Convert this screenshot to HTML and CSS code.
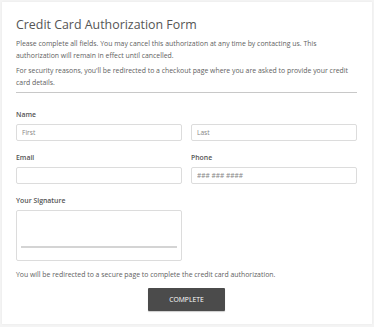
FILE: index.html
```html
<!DOCTYPE html>
<html lang="en">

<head>
  <title>Credit Card Authorization Form</title>
  <meta charset="utf-8">
  <link rel="stylesheet" href="styles.css">
</head>

<body>
  <div class="card">
    <h1>Credit Card Authorization Form</h1>
    <p>Please complete all fields. You may cancel this authorization at any time by contacting us. This authorization will remain in effect until cancelled.</p>
    <p>For security reasons, you'll be redirected to a checkout page where you are asked to provide your credit card details.</p>
    <hr>

    <div class="form">
      <div class="form-control">
        <label>Name</label>
        <div class="row">
          <input type="text" placeholder="First">
          <input type="text" placeholder="Last">
        </div>
      </div>
      <div class="row">
        <div class="form-control">
          <label>Email</label>
          <input type="text">
        </div>
        <div class="form-control">
          <label>Phone</label>
          <input type="text" placeholder="### ### ####">
        </div>
      </div>
      <div class="form-control sign-control">
        <label>Your Signature</label>
        <div class="row">
          <div class="signature"><div class="sign-line"></div></div>
          <div></div>
        </div>
      </div>
      <p class="note">You will be redirected to a secure page to complete the credit card authorization.</p>
      <div class="actions">
        <button class="btn">COMPLETE</button>
      </div>
    </div>
  </div>
</body>

</html>
```

FILE: styles.css
```css
html,
body {
  padding: 0;
  margin: 0;
}

body {
  background: #f4f4f4;
  color: #616161;
  font: 6.9px/12px "Open Sans", "Liberation Sans", sans-serif;
  padding: 2px;
}

input,
button,
label,
p {
  font: inherit;
}

.card {
  background: #fff;
  width: 341px;
  height: 308px;
  padding: 14px 15px 0 14px;
  box-shadow: 0 0 2px rgba(0, 0, 0, .06);
}

h1 {
  margin: 0 0 4px;
  font-size: 12.4px;
  line-height: 18px;
  font-weight: normal;
  color: #555;
}

p {
  margin: 0 0 3px;
}

hr {
  border: none;
  border-top: 1px solid #c8c8c8;
  margin: 3px 0 16px;
}

.row {
  display: grid;
  grid-template-columns: 1fr 1fr;
  column-gap: 9px;
}

.form-control {
  margin-bottom: 11px;
}

.form label {
  display: block;
  font-weight: 600;
  color: #555;
  margin-bottom: 3px;
}

input[type=text] {
  box-sizing: border-box;
  width: 100%;
  height: 17px;
  padding: 0 5px;
  border: 1px solid #dcdcdc;
  border-radius: 2px;
  color: #666;
  font-size: 6.6px;
}

input::placeholder {
  color: #858585;
}

.signature {
  box-sizing: border-box;
  height: 51px;
  border: 1px solid #dcdcdc;
  border-radius: 2px;
  padding: 35px 4px 0;
}

.sign-line {
  height: 2px;
  background: #d4d4d4;
}

.sign-control {
  margin-bottom: 0;
}

.note {
  margin: 8px 0 7px;
}

.actions {
  text-align: center;
}

.btn {
  background: #4b4b4b;
  color: #fff;
  width: 77px;
  height: 23px;
  border: none;
  border-radius: 1px;
  box-shadow: 0 1px 1px rgba(0, 0, 0, .2);
  font-size: 6.8px;
  padding: 0;
}
```
